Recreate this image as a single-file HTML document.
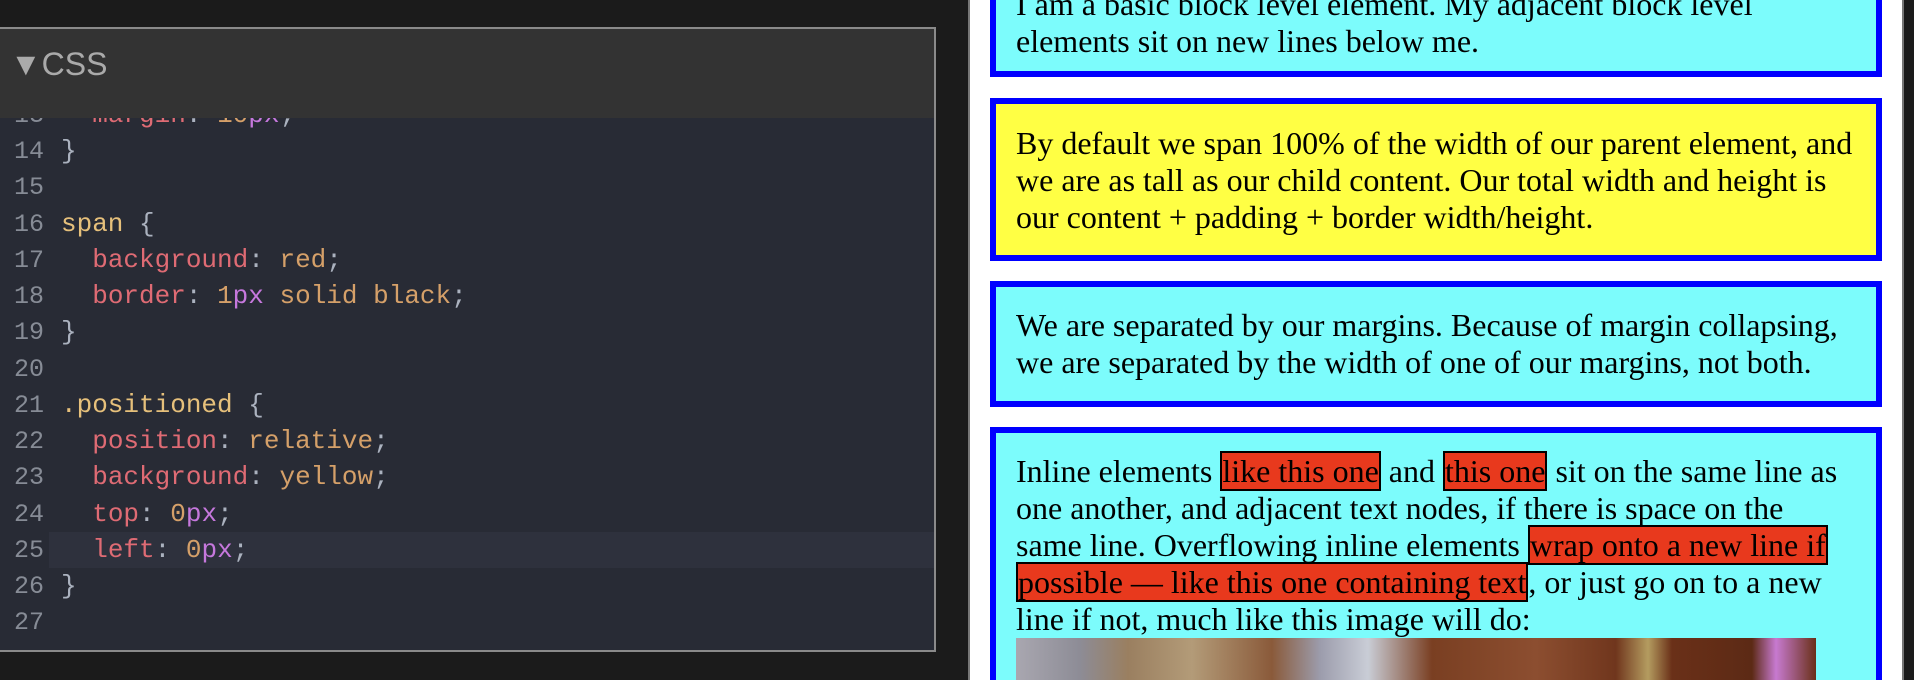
<!DOCTYPE html>
<html><head><meta charset="utf-8"><style>
*{margin:0;padding:0;box-sizing:border-box}
html,body{width:1914px;height:680px;overflow:hidden}
body{background:#1b1b1b;position:relative}
#panel{position:absolute;left:0;top:27px;width:936px;height:625px;border:2px solid #8a8a8a;border-left:none;background:#282b35;overflow:hidden}
#hdr{position:absolute;left:0;top:0;right:0;height:89px;background:#333;color:#aaa;font:32px "Liberation Sans",sans-serif;padding:10px 0 0 10px;line-height:50px;z-index:2}
.ln{position:absolute;left:0;height:36px;width:100%;font:26px/36px "Liberation Mono",monospace;color:#abb2bf;white-space:pre}
.ln .n{display:inline-block;width:44px;text-align:right;color:#878c96;margin-right:17px;font-size:25px}
.p{color:#df6b74}.v{color:#d5a069}.u{color:#c678dd}.s{color:#e6c07b}
#right{position:absolute;left:968px;top:0;width:934px;height:680px;background:#fff;border-left:2px solid #777}
#rb{position:absolute;left:1902px;top:0;width:2px;height:680px;background:#777}
.box{position:absolute;left:990px;width:892px;border:6px solid #0000ff;background:#7cfcfc;padding:0 0 0 20px;font:32px/37px "Liberation Serif",serif;color:#000;white-space:nowrap;overflow:hidden}
.r{background:#e8391d;border:2px solid #000}
</style></head><body>
<div id="panel">
<div id="hdr">▼CSS</div>
<div class="ln" style="top:68px"><span class="n">13</span>  <span class="p">margin</span>: <span class="v">10</span><span class="u">px</span>;</div>
<div class="ln" style="top:104px"><span class="n">14</span>}</div>
<div class="ln" style="top:140px"><span class="n">15</span></div>
<div class="ln" style="top:177px"><span class="n">16</span><span class="s">span</span> {</div>
<div class="ln" style="top:213px"><span class="n">17</span>  <span class="p">background</span>: <span class="v">red</span>;</div>
<div class="ln" style="top:249px"><span class="n">18</span>  <span class="p">border</span>: <span class="v">1</span><span class="u">px</span> <span class="v">solid black</span>;</div>
<div class="ln" style="top:285px"><span class="n">19</span>}</div>
<div class="ln" style="top:322px"><span class="n">20</span></div>
<div class="ln" style="top:358px"><span class="n">21</span><span class="s">.positioned</span> {</div>
<div class="ln" style="top:394px"><span class="n">22</span>  <span class="p">position</span>: <span class="v">relative</span>;</div>
<div class="ln" style="top:430px"><span class="n">23</span>  <span class="p">background</span>: <span class="v">yellow</span>;</div>
<div class="ln" style="top:467px"><span class="n">24</span>  <span class="p">top</span>: <span class="v">0</span><span class="u">px</span>;</div>
<div class="ln" style="top:503px;background:linear-gradient(90deg,#282b35 49px,#2e313d 49px)"><span class="n">25</span>  <span class="p">left</span>: <span class="v">0</span><span class="u">px</span>;</div>
<div class="ln" style="top:539px"><span class="n">26</span>}</div>
<div class="ln" style="top:575px"><span class="n">27</span></div>
</div>
<div id="right"></div><div id="rb"></div>
<div class="box" style="top:-40px;height:117px;padding-top:20px">I am a basic block level element. My adjacent block level<br>elements sit on new lines below me.</div>
<div class="box" style="top:98px;height:163px;padding-top:21px;background:#ffff44">By default we span 100% of the width of our parent element, and<br>we are as tall as our child content. Our total width and height is<br>our content + padding + border width/height.</div>
<div class="box" style="top:281px;height:126px;padding-top:20px">We are separated by our margins. Because of margin collapsing,<br>we are separated by the width of one of our margins, not both.</div>
<div class="box" style="top:427px;height:253px;padding-top:20px;border-bottom:none">Inline elements <span class="r">like this one</span> and <span class="r">this one</span> sit on the same line as<br>one another, and adjacent text nodes, if there is space on the<br>same line. Overflowing inline elements <span class="r">wrap onto a new line if</span><br><span class="r">possible — like this one containing text</span>, or just go on to a new<br>line if not, much like this image will do:
<div style="position:absolute;left:20px;top:205px;width:800px;height:60px;background:linear-gradient(90deg,#a9a7b0 0%,#8d8c96 8%,#9a7f60 14%,#b39b78 22%,#8a5a3a 32%,#9c9cac 38%,#c9cdd6 44%,#7a3f22 52%,#8c4e30 65%,#70361d 75%,#b49c60 79%,#6a3018 82%,#5c2a15 92%,#c77ad0 95%,#6a3018 100%)"></div></div>
</body></html>
